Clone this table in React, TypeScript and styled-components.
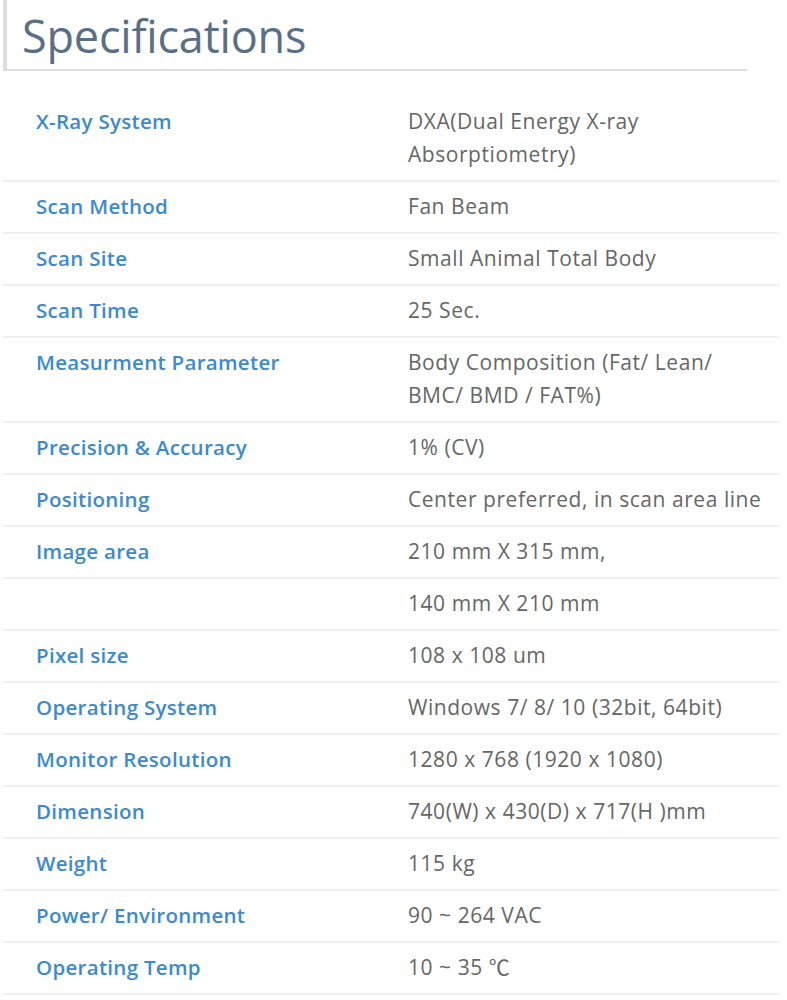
import styled, { createGlobalStyle } from "styled-components";

const specs: [string, string][] = [
  ["X-Ray System", "DXA(Dual Energy X-ray Absorptiometry)"],
  ["Scan Method", "Fan Beam"],
  ["Scan Site", "Small Animal Total Body"],
  ["Scan Time", "25 Sec."],
  ["Measurment Parameter", "Body Composition (Fat/ Lean/ BMC/ BMD / FAT%)"],
  ["Precision & Accuracy", "1% (CV)"],
  ["Positioning", "Center preferred, in scan area line"],
  ["Image area", "210 mm X 315 mm,"],
  ["", "140 mm X 210 mm"],
  ["Pixel size", "108 x 108 um"],
  ["Operating System", "Windows 7/ 8/ 10 (32bit, 64bit)"],
  ["Monitor Resolution", "1280 x 768 (1920 x 1080)"],
  ["Dimension", "740(W) x 430(D) x 717(H )mm"],
  ["Weight", "115 kg"],
  ["Power/ Environment", "90 ~ 264 VAC"],
  ["Operating Temp", "10 ~ 35 ℃"],
];

const App = () => {
  return (
    <>
      <GlobalStyle />
      <Page>
        <Heading>Specifications</Heading>
        <SpecTable>
          <tbody>
            {specs.map(([label, value], i) => (
              <Row key={i}>
                <Label>{label}</Label>
                <Value>{value}</Value>
              </Row>
            ))}
          </tbody>
        </SpecTable>
      </Page>
    </>
  );
};

export default App;

const GlobalStyle = createGlobalStyle`
  body {
    margin: 0;
    background: #fff;
    font-family: "Open Sans", "Noto Sans CJK KR", sans-serif;
  }
`;

const Page = styled.div`
  padding-left: 3px;
  width: 777px;
`;

const Heading = styled.h2`
  margin: 0;
  width: 744px;
  box-sizing: border-box;
  height: 71px;
  padding-left: 15px;
  border-left: 4px solid #dedede;
  border-bottom: 2px solid #dedede;
  color: #5a6f87;
  font-size: 45px;
  font-weight: 400;
  line-height: 72px;
  letter-spacing: -0.2px;
`;

const SpecTable = styled.table`
  width: 777px;
  margin-top: 26px;
  border-collapse: collapse;
  line-height: 33px;
  table-layout: fixed;
`;

const Row = styled.tr`
  border-bottom: 2px solid #f0f0f0;
`;

const Label = styled.td`
  width: 372px;
  padding: 8px 0 9px 33px;
  vertical-align: top;
  color: #3a8ad0;
  font-size: 20.5px;
  font-weight: 600;
  letter-spacing: 0.3px;
`;

const Value = styled.td`
  padding: 8px 12px 9px 0;
  vertical-align: top;
  color: #666;
  font-size: 21px;
  letter-spacing: 0.55px;
`;
